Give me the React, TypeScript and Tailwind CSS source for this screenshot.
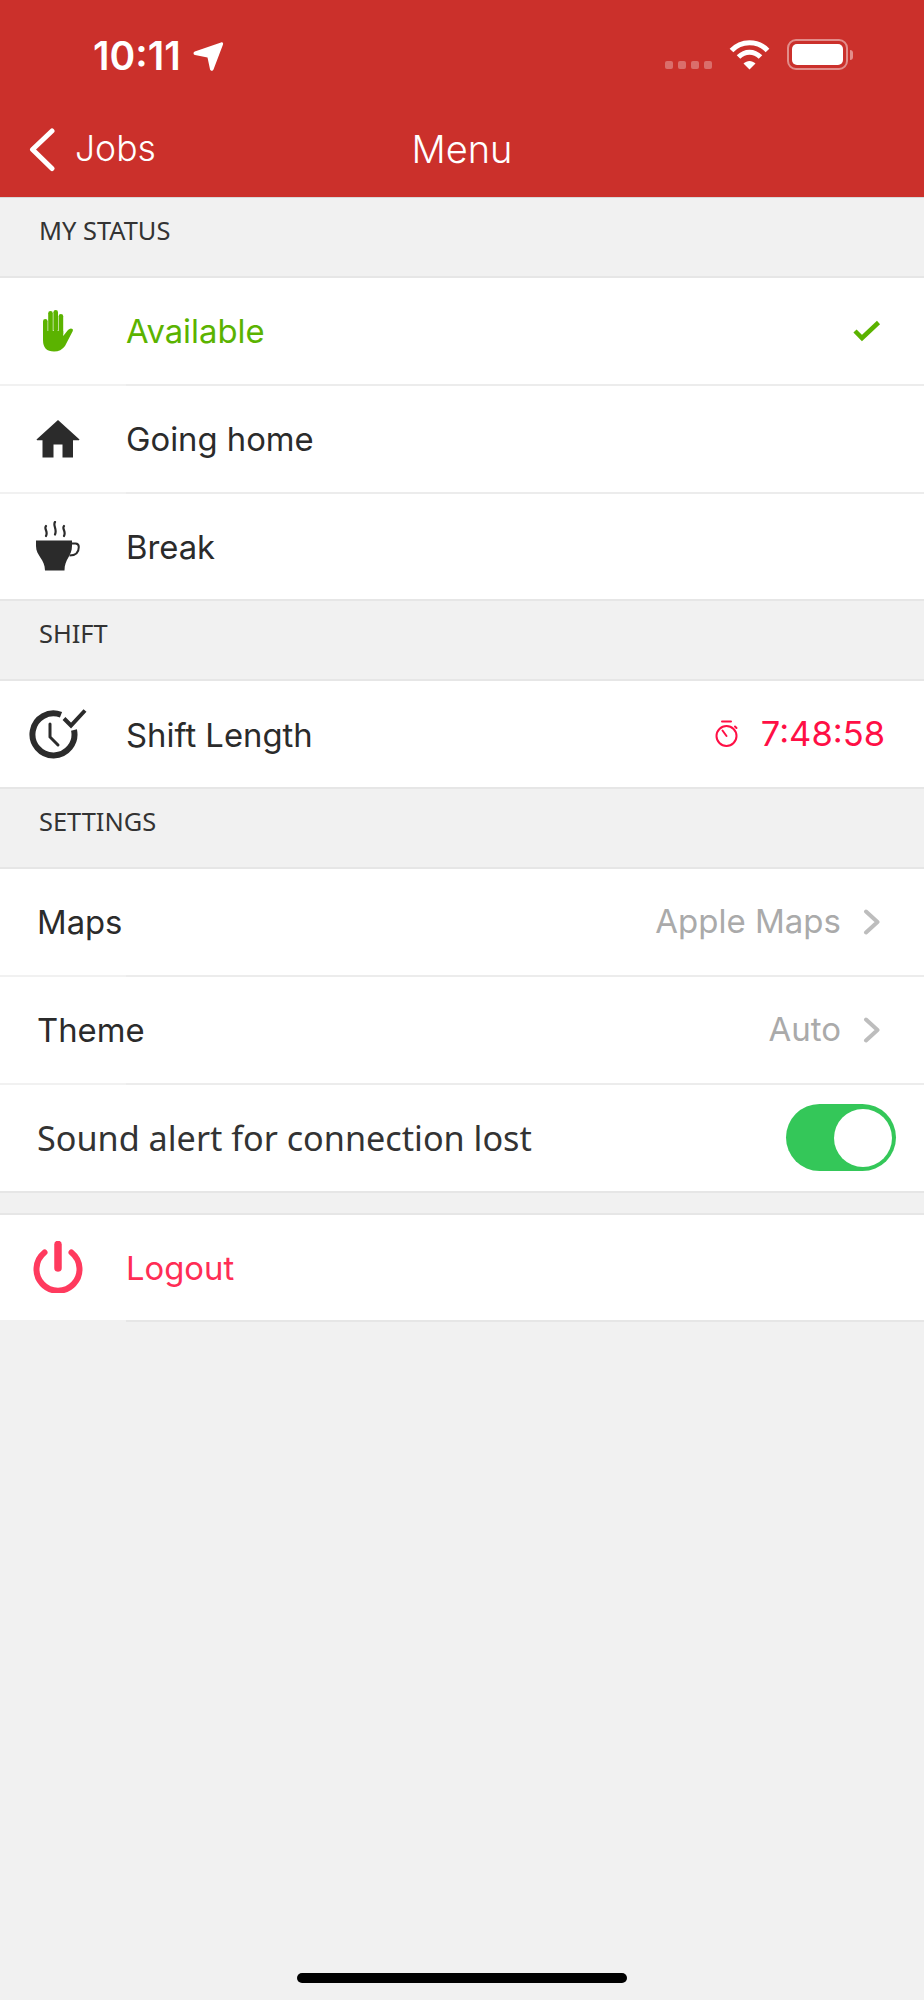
import { ReactNode } from 'react'

const RED = '#ff0f45'

const HandIcon = () => (
	<svg width="30" height="42" viewBox="0 0 30 42" fill="#5bb300">
		<rect x="0" y="9" width="4.600" height="22" rx="2.300" />
		<rect x="5.200" y="1" width="4.600" height="22" rx="2.300" />
		<rect x="10.400" y="0" width="4.600" height="22" rx="2.300" />
		<rect x="15.600" y="4" width="4.600" height="22" rx="2.300" />
		<path d="M0 21H20.200V26L25 20Q27.500 17.500 29.500 19 30.500 20.500 29 22.500L22 36Q18 41.500 11 41.500 0 41.500 0 30z" />
	</svg>
)

const HomeIcon = () => (
	<svg width="44" height="38" viewBox="0 0 44 38" fill="#2b2b2b">
		<path d="M22 0 43.500 19.500 43 20.300H37V37.500H26.500V24.500H17.500V37.500H6.500V20.300H1L.5 19.500z" />
	</svg>
)

const CupIcon = () => (
	<svg width="44" height="50" viewBox="0 0 44 50" fill="none">
		<path d="M10 5c-2.500 3 2.500 5 0 10M19 1c-2.500 3.500 2.500 7 0 12.500M28 5c-2.500 3 2.500 5 0 10" stroke="#2b2b2b" strokeWidth="2.200" strokeLinecap="round" />
		<path d="M0 19.500H36V25C36 35 28.500 38 28.500 49.500H9C9 38 0 35 0 25z" fill="#2b2b2b" />
		<path d="M35 22.500h4.500c2.200 0 3.300 1.300 3.300 3.500 0 5-3 8.500-9.300 8.500" stroke="#2b2b2b" strokeWidth="2" />
	</svg>
)

const ShiftIcon = () => (
	<svg width="58" height="54" viewBox="0 0 58 54" fill="none" stroke="#2b2b2b">
		<path d="M32 7.800A21 21 0 1 0 45 23" strokeWidth="6" />
		<path d="M21 17V30L29 38" strokeWidth="3" strokeLinecap="round" />
		<path d="M35 11.500 42 18.500 56 3.500" strokeWidth="4" />
	</svg>
)

const PowerIcon = () => (
	<svg width="50" height="52" viewBox="0 0 50 52" fill="none" stroke="#ff3a5e" strokeLinecap="round">
		<path d="M11.500 11.500a21.500 21.500 0 1 0 27 0" strokeWidth="6" />
		<path d="M25 3.500V27" strokeWidth="7.500" />
	</svg>
)

const CheckIcon = () => (
	<svg width="28" height="22" viewBox="0 0 28 22" fill="none">
		<path d="M2 11 9 18 25.500 2.500" stroke="#5bb300" strokeWidth="4.500" />
	</svg>
)

const TimerIcon = () => (
	<svg width="24" height="28" viewBox="0 0 24 28" fill="none" stroke={RED} strokeWidth="2">
		<circle cx="11.500" cy="16" r="10" />
		<path d="M7 1.500H16M11.500 16 7.500 10.500M20 6.500 21.500 8" strokeLinecap="round" />
	</svg>
)

const Chevron = () => (
	<svg width="18" height="26" viewBox="0 0 18 26" fill="none">
		<path d="M3 2.500 14.500 13 3 23.500" stroke="#bdbdbd" strokeWidth="4" strokeLinecap="round" strokeLinejoin="round" />
	</svg>
)

const StatusBar = () => (
	<div className="flex h-[112px] items-start justify-between pt-[39px] pr-[71px] pl-[93px]">
		<div className="flex items-center gap-[12px] font-['Inter',sans-serif] text-[39px] leading-[34px] font-semibold text-white">
			10:11
			<svg width="31" height="31" viewBox="0 0 31 31" fill="white">
				<path d="M28 1.500c1.500-.5 2.500.5 2 2L20.500 28.500c-.7 1.800-3 1.700-3.500-.2L14.500 16.500 2 14c-1.900-.4-2-2.800-.2-3.500z" />
			</svg>
		</div>
		<div className="flex items-start">
			<div className="mt-[22px] mr-[17px] flex gap-[5px]">
				<div className="h-2 w-2 rounded-[2px] bg-white/30" />
				<div className="h-2 w-2 rounded-[2px] bg-white/30" />
				<div className="h-2 w-2 rounded-[2px] bg-white/30" />
				<div className="h-2 w-2 rounded-[2px] bg-white/30" />
			</div>
			<svg className="mr-[17px]" width="41" height="31" viewBox="0 0 41 31" fill="none" stroke="white" strokeWidth="5">
				<path d="M2.500 11.500C12 1 29 1 38.500 11.500" />
				<path d="M9.500 18C16 11.500 25 11.500 31.500 18" />
				<path d="M14.500 24.500 20.500 30.500 26.500 24.500C23 21 18 21 14.500 24.500z" fill="white" stroke="none" />
			</svg>
			<div className="flex items-center">
				<div className="h-[31px] w-[61px] rounded-[9px] border-2 border-white/45 p-[3px]">
					<div className="h-full w-full rounded-[5px] bg-white" />
				</div>
				<div className="ml-[2px] h-[10px] w-[3px] rounded-r-[3px] bg-white/45" />
			</div>
		</div>
	</div>
)

const NavBar = () => (
	<div className="relative flex h-[85px] items-start pl-[29px] font-['Inter',sans-serif] leading-[60px] font-[350] text-white">
		<svg className="mt-[16px]" width="26" height="44" viewBox="0 0 26 44" fill="none">
			<path d="M23 3 3.500 21.500 23 40.500" stroke="white" strokeWidth="5" strokeLinecap="round" strokeLinejoin="round" />
		</svg>
		<span className="ml-[20px] pt-[7px] text-[35.500px]">Jobs</span>
		<span className="absolute inset-x-0 top-[7px] text-center text-[38px]">Menu</span>
	</div>
)

const SectionHeader = ({ title }: { title: string }) => (
	<div className="h-[80px] border-b-2 border-[#e6e6e6] pt-[14px] pl-[39px] text-[25.400px] leading-[36px] text-[#333333]">
		{title}
	</div>
)

const Divider = () => <div className="ml-[126px] h-[2px] bg-[#ececec]" />

const Row: React.FC<{
	icon?: ReactNode
	label: string
	color?: string
	font?: string
	right?: ReactNode
}> = ({ icon, label, color = 'text-[#2b2b2b]', font = "font-['Inter',sans-serif] pt-[2px] text-[32.800px]", right }) => (
	<div className="flex h-[105.8px] items-center bg-white">
		{icon ? (
			<div className="flex w-[126px] justify-center pr-[10px]">{icon}</div>
		) : (
			<div className="w-[37px]" />
		)}
		<span className={`flex-1 ${font} ${color}`}>{label}</span>
		{right}
	</div>
)

const Disclosure = ({ value }: { value: string }) => (
	<div className="flex items-center gap-[22px] pr-[43px] font-['Inter',sans-serif] text-[33px] text-[#aaaaaa]">
		{value}
		<Chevron />
	</div>
)

const Toggle = () => (
	<div className="mr-[28px] flex h-[67px] w-[110px] items-center justify-end rounded-full bg-[#34c759] pr-[4px]">
		<div className="h-[58px] w-[58px] rounded-full bg-white" />
	</div>
)

export default function App() {
	return (
		<div className="flex h-[2000px] w-[924px] flex-col bg-[#f1f1f1] font-['Noto_Sans',sans-serif]">
			<div className="h-[197px] bg-[#cb302b]">
				<StatusBar />
				<NavBar />
			</div>
			<div className="h-[1px] bg-[#d8d8d8]" />
			<SectionHeader title="MY STATUS" />
			<Row
				icon={<HandIcon />}
				label="Available"
				color="text-[#5bb300]"
				right={
					<div className="mr-[43px] flex">
						<CheckIcon />
					</div>
				}
			/>
			<Divider />
			<Row icon={<HomeIcon />} label="Going home" />
			<Divider />
			<Row icon={<CupIcon />} label="Break" />
			<div className="h-[2px] bg-[#e6e6e6]" />
			<SectionHeader title="SHIFT" />
			<Row
				icon={<ShiftIcon />}
				label="Shift Length"
				right={
					<div className="flex items-center gap-[22px] pr-[39px] font-['Inter',sans-serif] text-[34.500px] text-[#ff0f45]">
						<TimerIcon />
						7:48:58
					</div>
				}
			/>
			<div className="h-[2px] bg-[#e6e6e6]" />
			<SectionHeader title="SETTINGS" />
			<Row label="Maps" right={<Disclosure value="Apple Maps" />} />
			<Divider />
			<Row label="Theme" right={<Disclosure value="Auto" />} />
			<Divider />
			<Row label="Sound alert for connection lost" font="text-[34.200px]" color="text-[#333333]" right={<Toggle />} />
			<div className="h-[2px] bg-[#e6e6e6]" />
			<div className="h-[22px] border-b-2 border-[#e6e6e6]" />
			<Row icon={<PowerIcon />} label="Logout" color="text-[#ff2d55]" />
			<div className="ml-[126px] h-[2px] bg-[#e6e6e6]" />
			<div className="flex flex-1 items-end justify-center pb-[17px]">
				<div className="h-[10px] w-[330px] rounded-full bg-black" />
			</div>
		</div>
	)
}
